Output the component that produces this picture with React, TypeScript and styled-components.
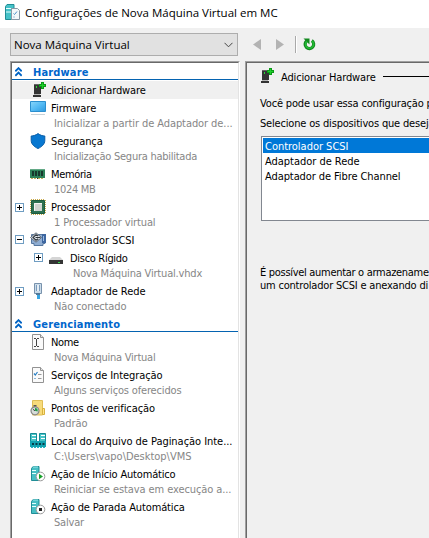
import React from 'react';
import styled, { createGlobalStyle } from 'styled-components';

const GlobalStyle = createGlobalStyle`
  html, body { margin: 0; height: 100%; overflow: hidden; }
  body { background: #fff; }
  *, *::before { box-sizing: border-box; }
`;

const uiFont = `"DejaVu Sans Condensed", "DejaVu Sans", sans-serif`;

const Window = styled.div`
  display: flex;
  flex-direction: column;
  width: 429px;
  height: 538px;
  overflow: hidden;
  background: #f0f0f0;
  color: #000;
  font: 11px/15px ${uiFont};
  white-space: nowrap;
  svg { display: block; flex: none; }
`;

const TitleBar = styled.header`
  display: flex;
  align-items: center;
  flex: none;
  gap: 4px;
  height: 28px;
  padding: 0 0 3px 5px;
  background: #fff;
  font: 11.5px/16px "Open Sans", "Noto Sans", sans-serif;
`;

const Toolbar = styled.div`
  display: flex;
  align-items: center;
  flex: none;
  height: 33px;
  padding: 0 0 0 10px;
`;

const Combo = styled.div`
  display: flex;
  align-items: center;
  justify-content: space-between;
  width: 228px;
  height: 23px;
  padding: 0 4px 0 3px;
  border: 1px solid #adadad;
  background: #e1e1e1;
  font: 11.5px/16px "Open Sans", "Noto Sans", sans-serif;
`;

const NavButtons = styled.div`
  display: flex;
  align-items: center;
  gap: 15px;
  margin-left: 15px;
`;

const Separator = styled.i`
  width: 2px;
  height: 17px;
  margin: 0 6px 0 11px;
  border-left: 1px solid #a9a9a9;
  border-right: 1px solid #fff;
`;

const Panels = styled.main`
  display: flex;
  flex: 1;
  gap: 5px;
  min-height: 0;
  padding-left: 10px;
`;

const SunkenFrame = styled.div`
  border: solid #a0a0a0;
  border-width: 1px 0 0 1px;
`;

const TreeFrame = styled(SunkenFrame)`
  width: 230px;
  flex: none;
  border-right: 1px solid #fff;
`;

const Tree = styled.div`
  height: 100%;
  border: solid #696969;
  border-width: 1px 0 0 1px;
  border-right: 1px solid #e3e3e3;
  background: #fff;
`;

const SectionHeader = styled.div`
  display: flex;
  align-items: flex-start;
  gap: 11px;
  height: 17px;
  margin-bottom: 1px;
  padding: 2px 0 0 3px;
  border-bottom: 1px solid #0563b1;
  color: #0066cc;
  font-weight: bold;
  line-height: 15px;
  letter-spacing: 0.16px;
  svg { margin-top: 2px; }
`;

const TreeRow = styled.div<{ $nested?: boolean; $selected?: boolean }>`
  display: grid;
  grid-template-columns: 15px 21px 1fr;
  padding-left: ${p => (p.$nested ? 22 : 3)}px;
  background: ${p => (p.$selected ? '#f0f0f0' : 'transparent')};
`;

const Expander = styled.span<{ $low: boolean }>`
  display: block;
  padding-top: ${p => (p.$low ? 5 : 4)}px;
`;

const IconCell = styled.span`
  display: block;
  height: 18px;
  padding-top: 1px;
`;

const RowText = styled.div`
  min-width: 0;
  padding-top: 2px;
`;

const Label = styled.div<{ $track?: number }>`
  height: 15px;
  letter-spacing: ${p => p.$track ?? 0}px;
`;

const Detail = styled(Label)`
  height: 16px;
  padding-left: 3px;
  color: #868686;
`;

const DetailsFrame = styled(SunkenFrame)`
  flex: 1;
  min-width: 0;
`;

const Details = styled.section`
  height: 100%;
  padding: 5px 0 0 14px;
  border: solid #696969;
  border-width: 1px 0 0 1px;
  overflow: hidden;
`;

const DetailsHeader = styled.div`
  display: flex;
  align-items: center;
  height: 18px;
  gap: 7px;
  margin-left: -3px;
  letter-spacing: -0.14px;
  svg { align-self: flex-start; }
  &::after {
    content: '';
    flex: 1;
    height: 1px;
    margin-bottom: 2px;
    background: #000;
  }
`;

const Text = styled.p<{ $top?: number; $track: number }>`
  margin: ${p => p.$top ?? 0}px 0 0 -1px;
  line-height: 13px;
  letter-spacing: ${p => p.$track}px;
`;

const DeviceList = styled.div`
  width: 300px;
  height: 85px;
  margin-top: 6px;
  padding: 1px;
  border: 1px solid #828790;
  background: #fff;
`;

const Device = styled.div<{ $active?: boolean; $track: number }>`
  height: 15px;
  padding-left: 2px;
  line-height: 17px;
  letter-spacing: ${p => p.$track}px;
  color: ${p => (p.$active ? '#fff' : '#000')};
  background: ${p => (p.$active ? '#0078d7' : 'transparent')};
`;

const Plus = () => (
  <svg width="9" height="9" shapeRendering="crispEdges">
    <path d="M.5.5h8v8h-8z" fill="#fff" stroke="#6f9dc2" />
    <path d="M2 4h5v1H2zM4 2h1v5H4z" fill="#000" />
  </svg>
);
const Minus = () => (
  <svg width="9" height="9" shapeRendering="crispEdges">
    <path d="M.5.5h8v8h-8z" fill="#fff" stroke="#6f9dc2" />
    <path d="M2 4h5v1H2z" fill="#000" />
  </svg>
);
const Collapse = () => (
  <svg width="7" height="10" fill="none" stroke="#0063c4" strokeWidth="1.9">
    <path d="M.3 4.4 3.5 1.2 6.7 4.4M.3 8.9 3.5 5.7 6.7 8.9" />
  </svg>
);

const AddHardwareIcon = () => (
  <svg width="16" height="16" shapeRendering="crispEdges">
    <path d="M4 2h7v10H4z" fill="#343434" />
    <path d="M4 2h5v1H4z" fill="#666" />
    <path d="M3 13h8v2H3z" fill="#333" />
    <path d="M4 12h6v1H4z" fill="#b5b5b5" />
    <path d="M6 4h1v2H6z" fill="#29d739" />
    <path d="M11 0h3v2h2v3h-2v2h-3V5H9V2h2z" fill="#0b9a17" />
    <path d="M12 1h1v2h2v1h-2v2h-1V4h-2V3h2z" fill="#1fd02a" />
  </svg>
);
const FirmwareIcon = () => (
  <svg width="16" height="16">
    <defs>
      <linearGradient id="screen" x1="0" y1="0" x2="1" y2="1">
        <stop offset="0" stopColor="#8ad6fa" />
        <stop offset=".5" stopColor="#55bbf4" />
        <stop offset="1" stopColor="#2c98df" />
      </linearGradient>
    </defs>
    <path d="M.5 1.500h15v10H.5z" fill="url(#screen)" stroke="#2b8fcf" />
    <path d="M1 14.500h14" stroke="#c9d2d8" />
  </svg>
);
const ShieldIcon = () => (
  <svg width="16" height="16">
    <path d="M8 .6C5.800 2.200 3.400 3 1.200 3v4.500c0 3.600 3.200 6.500 6.800 8 3.600-1.500 6.800-4.400 6.800-8V3C12.600 3 10.200 2.200 8 .6z" fill="#0878d1" stroke="#075ba6" />
  </svg>
);
const MemoryIcon = () => (
  <svg width="16" height="16" shapeRendering="crispEdges">
    <path d="M0 3h15v9H0z" fill="#2d8159" />
    <path d="M0 3h15v1H0z" fill="#63a986" />
    <path d="M2 5h2v5H2zM5 5h2v5H5zM8 5h2v5H8zM11 5h2v5h-2z" fill="#17382d" />
    <path d="M1 12h2v1H1zM4 12h2v1H4zM8 12h2v1H8zM11 12h2v1h-2z" fill="#c6b15a" />
    <path d="M7 12h1v1H7z" fill="#333" />
  </svg>
);
const CpuIcon = () => (
  <svg width="16" height="16">
    <path d="M1 .5h14M1 15.500h14M.5 1v14M15.500 1v14" stroke="#c9a948" strokeDasharray="1 1" />
    <path d="M1.500 1.500h13v13h-13z" fill="#2c7050" stroke="#1d5c40" />
    <path d="M4 4h8v8H4z" fill="#d0d4d0" />
    <path d="M4.500 12V4.500H12" fill="none" stroke="#f4f4f4" />
  </svg>
);
const ScsiIcon = () => (
  <svg width="16" height="16">
    <path d="M1.500 2.500h13.500v9H13v2H4v-2H1.500z" fill="#8fadd2" stroke="#56779f" />
    <path d="M12 2h4v9h-4z" fill="#3d66a0" />
    <path d="M13 4h1v5h-1z" fill="#9dbbe0" />
    <path d="M6 .8 11.500 5.500 6 10.200.5 5.500z" fill="#e8ecf0" stroke="#5b6675" />
    <path d="M8.200 4 6 2.700 3 5.500l3 2.800 2.200-1.600M5.500 5.500h5" fill="none" stroke="#303840" strokeWidth="1.200" />
  </svg>
);
const DiskIcon = () => (
  <svg width="16" height="16">
    <path d="M3 7h8l3 3H0z" fill="#d5d5d5" />
    <path d="M0 10h14v4H0z" fill="#343434" />
    <path d="M9 12h2v1H9z" fill="#35d94c" />
  </svg>
);
const NetworkIcon = () => (
  <svg width="16" height="16">
    <path d="M4.500.5h7v10h-7z" fill="#cbdcea" stroke="#7992ac" />
    <path d="M6.500 2v6M9.500 2v6" stroke="#7d9dbd" />
    <path d="M8 2v6" stroke="#fff" />
    <path d="M6 10h4v2H6z" fill="#537999" />
    <path d="M7 12h3v4H7z" fill="#37a5e3" />
  </svg>
);
const Sheet = () => (
  <>
    <path d="M2.500.5h8l3 3v12h-11z" fill="#fafafa" stroke="#929292" />
    <path d="M10.500.5v3h3" fill="#e4e4e4" stroke="#929292" />
  </>
);
const NameIcon = () => (
  <svg width="16" height="16">
    <Sheet />
    <path d="M4 4.500h2m1 0h2M6.500 5v7M4 12.500h2m1 0h2" fill="none" stroke="#444" />
  </svg>
);
const ServicesIcon = () => (
  <svg width="16" height="16">
    <Sheet />
    <path d="m4 6.500 1.300 1.500L7.500 5" fill="none" stroke="#277fc5" strokeWidth="1.200" />
    <path d="M8 7.500h3.500M8 11.500h3.500" stroke="#999" />
    <path d="M4 11.500h2" stroke="#8bb8dc" />
  </svg>
);
const CheckpointIcon = () => (
  <svg width="16" height="16">
    <path d="M2.500.5h10V15h-10z" fill="#f7db7c" stroke="#e0be56" />
    <path d="M12.500 8.500h2v6h-2z" fill="#ffe58b" stroke="#d8b13d" />
    <circle cx="5" cy="10.800" r="4" fill="#d7ddda" stroke="#888" strokeWidth="1.200" />
    <path d="M3.500 5.700h3" stroke="#555" strokeWidth="1.400" />
    <path d="M5 10.800V8a3 3 0 0 1 2.600 3.600z" fill="#239c46" />
    <path d="M5 10.800 3 9.300" stroke="#444" />
  </svg>
);
const PagingIcon = () => (
  <svg width="16" height="16">
    <path d="M.5.500h6v8h-6zM9.500.500h6v8h-6z" fill="#49c5c8" stroke="#168b96" />
    <path d="M2 2.500h4M11 2.500h4M2 5.500h4M11 5.500h4" stroke="#fff" />
    <path d="M7 0h2v8H7z" fill="#fff" />
    <path d="M0 8h16v6H0z" fill="#13a3b0" />
    <path d="M2 10h2v2H2zM5.500 10h2v2h-2zM9 10h2v2H9zM12.500 10h2v2h-2z" fill="#073e4a" />
    <path d="M1 14.500h14" stroke="#26b5c2" strokeDasharray="2 1" />
  </svg>
);
const Server = () => (
  <>
    <path d="M1.500 2.500 3 .5h6v14H1.500z" fill="#47bfc4" stroke="#218d96" />
    <path d="M2 4.500h4M2 7.500h4" stroke="#e7ffff" />
    <path d="M3 1h5" stroke="#9ae9eb" />
  </>
);
const StartIcon = () => (
  <svg width="16" height="16">
    <Server />
    <circle cx="10.500" cy="10.500" r="4.300" fill="#fff" stroke="#999" />
    <path d="M9 7.800v5.400l4-2.700z" fill="#18a12b" />
  </svg>
);
const StopIcon = () => (
  <svg width="16" height="16">
    <Server />
    <circle cx="10.500" cy="10.500" r="4.300" fill="#fff" stroke="#999" />
    <path d="M9 9h3v3H9z" fill="#222" />
  </svg>
);
const SettingsIcon = () => (
  <svg width="16" height="17">
    <path d="M.5 2.500 2 .5h7v15H.5z" fill="#45c2c8" stroke="#218d96" />
    <path d="M1 4.500h5M1 8h5" stroke="#e7ffff" />
    <path d="M6.500 4.500h6l2 2v9h-8z" fill="#f4f7fa" stroke="#8897a5" />
    <path d="m8.500 9.500 1 1 2.500-3M8.500 13h1" fill="none" stroke="#4a91c9" />
  </svg>
);

type Item = {
  label: string;
  track: number;
  detail?: string;
  detailTrack?: number;
  icon: React.FC;
  expander?: 'plus' | 'minus';
  nested?: boolean;
  selected?: boolean;
};

const hardware: Item[] = [
  { label: 'Adicionar Hardware', track: -0.14, icon: AddHardwareIcon, selected: true },
  { label: 'Firmware', track: 0, detail: 'Inicializar a partir de Adaptador de...', detailTrack: -0.08, icon: FirmwareIcon },
  { label: 'Segurança', track: -0.14, detail: 'Inicialização Segura habilitada', detailTrack: -0.26, icon: ShieldIcon },
  { label: 'Memória', track: -0.36, detail: '1024 MB', detailTrack: -0.3, icon: MemoryIcon },
  { label: 'Processador', track: -0.04, detail: '1 Processador virtual', detailTrack: -0.13, icon: CpuIcon, expander: 'plus' },
  { label: 'Controlador SCSI', track: -0.02, icon: ScsiIcon, expander: 'minus' },
  { label: 'Disco Rígido', track: -0.3, detail: 'Nova Máquina Virtual.vhdx', detailTrack: -0.18, icon: DiskIcon, expander: 'plus', nested: true },
  { label: 'Adaptador de Rede', track: -0.03, detail: 'Não conectado', detailTrack: -0.15, icon: NetworkIcon, expander: 'plus' },
];

const management: Item[] = [
  { label: 'Nome', track: -0.4, detail: 'Nova Máquina Virtual', detailTrack: -0.24, icon: NameIcon },
  { label: 'Serviços de Integração', track: -0.09, detail: 'Alguns serviços oferecidos', detailTrack: -0.16, icon: ServicesIcon },
  { label: 'Pontos de verificação', track: -0.08, detail: 'Padrão', detailTrack: -0.1, icon: CheckpointIcon },
  { label: 'Local do Arquivo de Paginação Inte...', track: -0.04, detail: 'C:\\Users\\vapo\\Desktop\\VMS', detailTrack: -0.02, icon: PagingIcon },
  { label: 'Ação de Início Automático', track: -0.18, detail: 'Reiniciar se estava em execução a...', detailTrack: -0.09, icon: StartIcon },
  { label: 'Ação de Parada Automática', track: -0.12, detail: 'Salvar', detailTrack: -0.2, icon: StopIcon },
];

const Section = ({ title, items }: { title: string; items: Item[] }) => (
  <>
    <SectionHeader><Collapse />{title}</SectionHeader>
    {items.map(({ icon: Icon, ...item }) => (
      <TreeRow key={item.label} $nested={item.nested} $selected={item.selected}>
        <Expander $low={item.expander === 'plus' && !item.nested}>
          {item.expander === 'plus' && <Plus />}
          {item.expander === 'minus' && <Minus />}
        </Expander>
        <IconCell><Icon /></IconCell>
        <RowText>
          <Label $track={item.track}>{item.label}</Label>
          {item.detail && <Detail $track={item.detailTrack}>{item.detail}</Detail>}
        </RowText>
      </TreeRow>
    ))}
  </>
);

export default function App() {
  return (
    <Window>
      <GlobalStyle />
      <TitleBar><SettingsIcon />Configurações de Nova Máquina Virtual em MC</TitleBar>
      <Toolbar>
        <Combo>
          Nova Máquina Virtual
          <svg width="9" height="6" fill="none" stroke="#444"><path d="m.5.8 4 4 4-4" /></svg>
        </Combo>
        <NavButtons>
          <svg width="8" height="11"><path d="M8 0v11L0 5.500z" fill="#b3b3b3" /></svg>
          <svg width="8" height="11"><path d="M0 0v11l8-5.500z" fill="#b3b3b3" /></svg>
        </NavButtons>
        <Separator />
        <svg width="13" height="13">
          <path d="M8.800 2.700a4.300 4.300 0 1 1-5.200.3" fill="none" stroke="#12891f" strokeWidth="3.200" />
          <path d="M.5.5h6v6z" fill="#12891f" />
          <path d="M9 3a4 4 0 1 1-5.200.3" fill="none" stroke="#22b935" strokeWidth="1.600" />
        </svg>
      </Toolbar>
      <Panels>
        <TreeFrame>
          <Tree>
            <Section title="Hardware" items={hardware} />
            <Section title="Gerenciamento" items={management} />
          </Tree>
        </TreeFrame>
        <DetailsFrame>
          <Details>
            <DetailsHeader><AddHardwareIcon />Adicionar Hardware</DetailsHeader>
            <Text $top={11} $track={-0.17}>Você pode usar essa configuração p</Text>
            <Text $top={7} $track={-0.18}>Selecione os dispositivos que deseja</Text>
            <DeviceList>
              <Device $active $track={-0.02}>Controlador SCSI</Device>
              <Device $track={-0.03}>Adaptador de Rede</Device>
              <Device $track={-0.09}>Adaptador de Fibre Channel</Device>
            </DeviceList>
            <Text $top={45} $track={-0.3}>É possível aumentar o armazename</Text>
            <Text $track={-0.2}>um controlador SCSI e anexando di</Text>
          </Details>
        </DetailsFrame>
      </Panels>
    </Window>
  );
}
